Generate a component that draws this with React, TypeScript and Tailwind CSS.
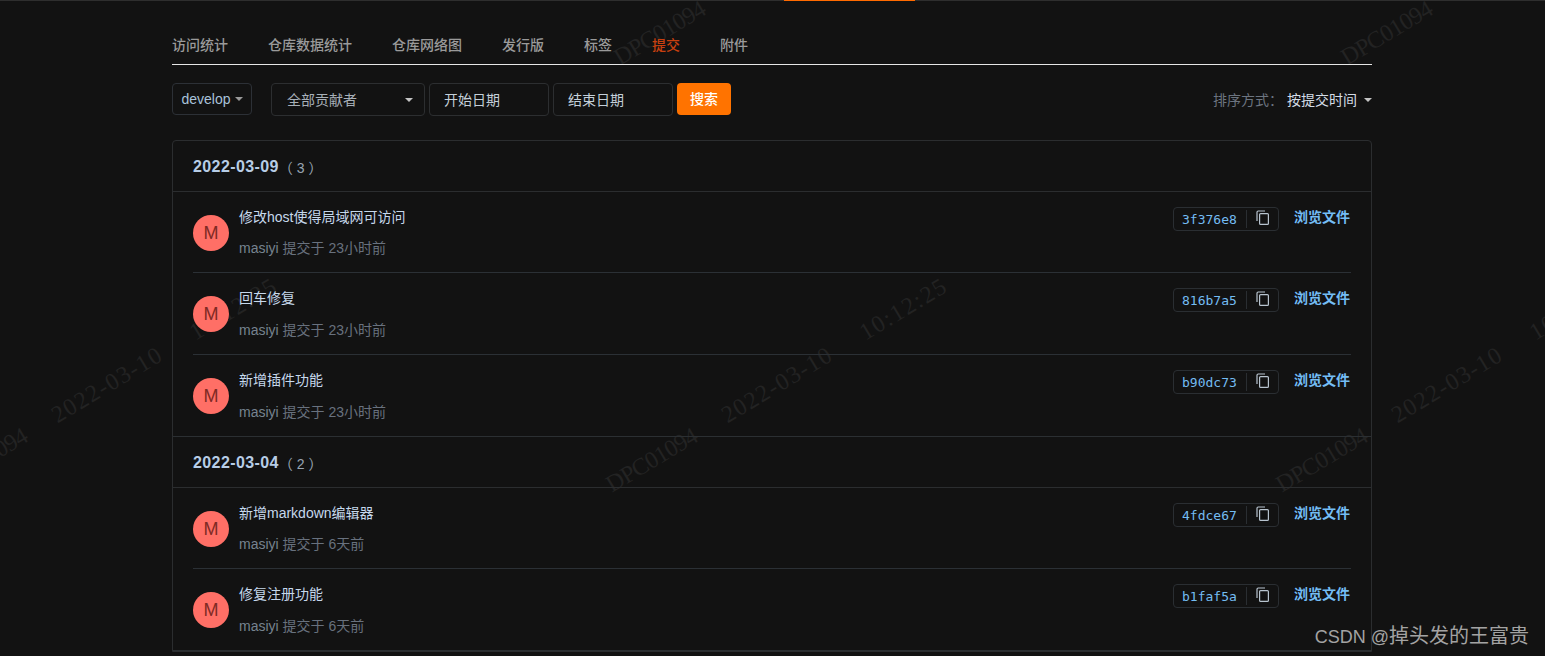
// Commit list page, dark theme, with the faint diagonal watermark behind it
const tabs = ["访问统计", "仓库数据统计", "仓库网络图", "发行版", "标签", "提交", "附件"]

const groups = [
  {
    date: "2022-03-09",
    count: 3,
    commits: [
      { title: "修改host使得局域网可访问", when: "23小时前", hash: "3f376e8" },
      { title: "回车修复", when: "23小时前", hash: "816b7a5" },
      { title: "新增插件功能", when: "23小时前", hash: "b90dc73" },
    ],
  },
  {
    date: "2022-03-04",
    count: 2,
    commits: [
      { title: "新增markdown编辑器", when: "6天前", hash: "4fdce67" },
      { title: "修复注册功能", when: "6天前", hash: "b1faf5a" },
    ],
  },
]

const marks = [
  { pos: "left-[616px] top-[45px]", full: false },
  { pos: "left-[1343px] top-[45px]", full: false },
  { pos: "left-[-62px] top-[472px]", full: true },
  { pos: "left-[608px] top-[472px]", full: true },
  { pos: "left-[1278px] top-[472px]", full: true },
]

function Caret({ color }: { color: string }) {
  return <span className={`h-0 w-0 border-x-[4px] border-t-[4px] border-x-transparent ${color}`} />
}

function CopyIcon() {
  return (
    <svg width="14" height="15" viewBox="0 0 14 15" fill="none" stroke="#b8c4cf" strokeWidth="1.2">
      <path d="M1 11V2.2C1 1.5 1.5 1 2.2 1H9" />
      <rect x="3.6" y="3.6" width="8.8" height="10.8" rx="1" />
    </svg>
  )
}

export default function App() {
  return (
    <div className="relative h-[656px] w-full overflow-hidden bg-[#121212] font-['Liberation_Sans','Noto_Sans_CJK_SC',sans-serif] text-sm">
      {/* watermark */}
      {marks.map((m) => (
        <span
          key={m.pos}
          className={`absolute ${m.pos} origin-left -rotate-[31deg] whitespace-pre font-['Liberation_Serif',serif] text-[24px] leading-[28px] text-[#232323]`}
        >
          <span className="tracking-[-0.65px]">DPC01094</span>
          {m.full && <span className="ml-[33px] tracking-[1.3px]">2022-03-10</span>}
          {m.full && <span className="ml-[36px] tracking-[1.6px]">10:12:25</span>}
        </span>
      ))}

      <div className="relative">
        {/* top strip */}
        <div className="flex h-px">
          <div className="w-[784px] bg-[#2e2e2e]" />
          <div className="w-[131px] bg-[#ff6a00]" />
          <div className="flex-1 bg-[#2e2e2e]" />
        </div>

        <div className="ml-[172px] w-[1200px]">
          {/* tabs */}
          <div className="flex gap-10 border-b border-[#e6e6e6] pb-[9px] pt-[34px] leading-5 font-medium text-[#9a9a9a]">
            {tabs.map((t) => (
              <span key={t} className={t === "提交" ? "text-[#c8400f]" : ""}>
                {t}
              </span>
            ))}
          </div>

          {/* filters */}
          <div className="mt-[18px] flex items-start">
            <button className="flex h-8 w-20 items-center justify-center gap-1 rounded-sm border border-[#2c3036] leading-5 text-[#a9c2da]">
              develop
              <Caret color="border-t-[#9a9a9a]" />
            </button>
            <div className="ml-[19px] flex h-[33px] w-[154px] items-center justify-between rounded-sm border border-[#2c2e30] pl-[15px] pr-[11px] text-[#a8b0b8]">
              全部贡献者
              <Caret color="border-t-[#c4c4c4]" />
            </div>
            <div className="ml-1 flex h-[33px] w-[120px] items-center rounded-sm border border-[#2c2e30] pl-[14px] text-[#c4d0da]">
              开始日期
            </div>
            <div className="ml-1 flex h-[33px] w-[120px] items-center rounded-sm border border-[#2c2e30] pl-[14px] text-[#c4d0da]">
              结束日期
            </div>
            <button className="ml-1 h-8 w-[54px] rounded-sm bg-[#ff7300] font-medium text-white">搜索</button>
            <div className="ml-auto flex h-[33px] items-center">
              <span className="text-[#6c7480]">排序方式：</span>
              <span className="ml-1 text-[#d4dce6]">按提交时间</span>
              <span className="ml-[7px]">
                <Caret color="block border-t-[#c4c4c4]" />
              </span>
            </div>
          </div>

          {/* commit groups */}
          <div className="mt-6 rounded-t border border-[#2b2d2f]">
            {groups.map((g) => (
              <div key={g.date} className="border-b border-[#2b2f32]">
                <div className="flex h-[51px] items-center border-b border-[#2b2d2f] pl-5 pt-[3px]">
                  <span className="text-[16px] font-bold tracking-[0.4px] text-[#b7cde6]">{g.date}</span>
                  <span className="text-[#98a5b3]">（ {g.count} ）</span>
                </div>
                <div className="px-5">
                  {g.commits.map((c) => (
                    <div
                      key={c.hash}
                      className="flex h-[82px] items-start border-b border-[#2b3035] first:h-[81px] last:h-[81px] last:border-b-0"
                    >
                      <div className="mt-[23px] flex h-9 w-9 items-center justify-center rounded-full bg-[#ff6f66] text-lg text-[#7e2a24]">
                        M
                      </div>
                      <div className="ml-2.5 flex h-full flex-col justify-between pb-[14px] pt-[15px]">
                        <div className="leading-5 text-[#c6d8ec]">{c.title}</div>
                        <div className="leading-5 text-[#68717e]">
                          <span className="text-[#76838f]">masiyi</span> 提交于 {c.when}
                        </div>
                      </div>
                      <div className="ml-auto mt-[15px] flex h-6 w-[106px] items-center rounded border border-[#2a2e32]">
                        <span className="w-[72px] pl-2 pt-[3px] font-['DejaVu_Sans_Mono',monospace] text-[13px] text-[#74bcf2]">
                          {c.hash}
                        </span>
                        <span className="flex h-[18px] flex-1 items-center justify-center border-l border-[#2a2e32] pb-1">
                          <CopyIcon />
                        </span>
                      </div>
                      <a className="ml-[15px] mr-px mt-[15px] font-bold leading-5 text-[#74bdf5]">浏览文件</a>
                    </div>
                  ))}
                </div>
              </div>
            ))}
          </div>
        </div>
      </div>

      {/* site watermark, lower right */}
      <span className="absolute bottom-[5px] right-4 text-[20px] leading-7 text-[#a3a3a3]">
        <span className="text-[18px]">CSDN @</span>掉头发的王富贵
      </span>
    </div>
  )
}
